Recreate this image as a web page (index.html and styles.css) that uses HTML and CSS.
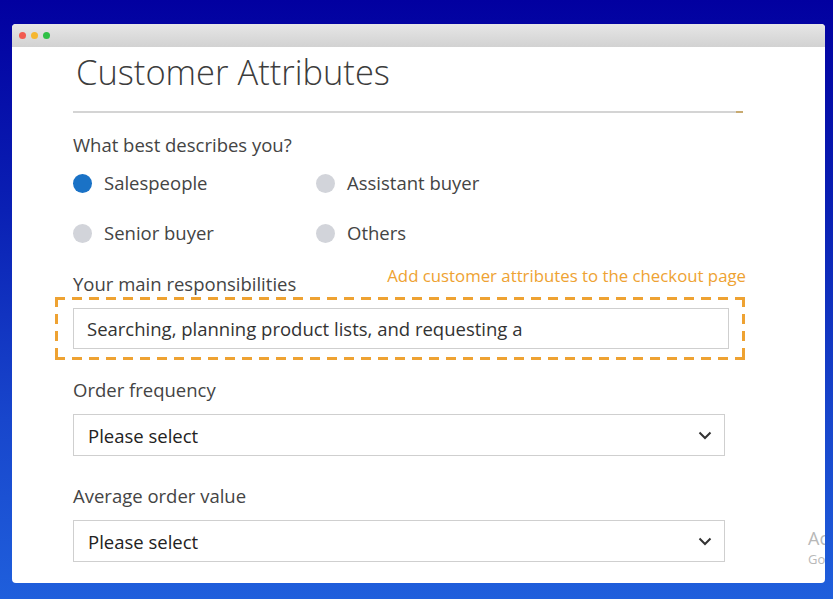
FILE: index.html
```html
<!DOCTYPE html>
<html>
<head>
<meta charset="utf-8">
<link rel="stylesheet" href="styles.css">
</head>
<body>
<div class="window">
  <div class="titlebar">
    <span class="dot red"></span><span class="dot yellow"></span><span class="dot green"></span>
  </div>
  <div class="content">
    <h1 class="title">Customer Attributes</h1>
    <div class="divider"></div>
    <div class="question">What best describes you?</div>
    <div class="radios">
      <div class="radio"><span class="circle on"></span>Salespeople</div>
      <div class="radio"><span class="circle"></span>Assistant buyer</div>
      <div class="radio"><span class="circle"></span>Senior buyer</div>
      <div class="radio"><span class="circle"></span>Others</div>
    </div>
    <div class="resp-head">
      <span class="label">Your main responsibilities</span>
      <span class="hint">Add customer attributes to the checkout page</span>
    </div>
    <div class="dashed">
      <div class="input">Searching, planning product lists, and requesting a</div>
    </div>
    <div class="label field-label">Order frequency</div>
    <div class="select">Please select
      <svg class="chev" width="14" height="9" viewBox="0 0 14 9"><path d="M1.5 1.5 L7 7 L12.5 1.5" fill="none" stroke="#333" stroke-width="2"/></svg>
    </div>
    <div class="label field-label second">Average order value</div>
    <div class="select">Please select
      <svg class="chev" width="14" height="9" viewBox="0 0 14 9"><path d="M1.5 1.5 L7 7 L12.5 1.5" fill="none" stroke="#333" stroke-width="2"/></svg>
    </div>
  </div>
  <div class="watermark"><div class="wm1">Activate Windows</div><div class="wm2">Go to Settings to activate Windows.</div></div>
</div>
</body>
</html>
```

FILE: styles.css
```css
html, body {
  margin: 0;
  padding: 0;
}
body {
  width: 833px;
  height: 599px;
  overflow: hidden;
  background: linear-gradient(180deg, #0200a0 0%, #0a20b4 35%, #1846cc 70%, #1f5fdc 100%);
  font-family: "Open Sans", "Noto Sans", sans-serif;
  padding: 24px 0 0 12px;
  box-sizing: border-box;
}
.window {
  position: relative;
  width: 813px;
  height: 559px;
  background: #fff;
  border-radius: 4px;
  overflow: hidden;
}
.titlebar {
  height: 23px;
  background: linear-gradient(180deg, #e6e6e6 0%, #d2d2d2 100%);
  display: flex;
  align-items: center;
  padding-left: 7px;
  gap: 5px;
}
.dot {
  width: 7px;
  height: 7px;
  border-radius: 50%;
}
.red { background: #f25a50; }
.yellow { background: #f5b730; }
.green { background: #2fc046; }
.content {
  padding: 0 0 0 61px;
  color: #444;
}
.title {
  margin: 2px 0 0 3px;
  font-weight: 300;
  font-size: 34.5px;
  line-height: 46px;
  color: #3c3c3c;
  letter-spacing: 0;
}
.divider {
  width: 670px;
  height: 2px;
  margin-top: 16px;
  background: linear-gradient(90deg, #d4d4d4 0%, #d4d4d4 99%, #c8aa70 99%);
}
.question {
  margin-top: 20px;
  font-size: 18.5px;
  line-height: 24px;
}
.radios {
  display: grid;
  grid-template-columns: 243px auto;
  row-gap: 26px;
  margin-top: 14px;
}
.radio {
  display: flex;
  align-items: center;
  font-size: 18.5px;
  line-height: 24px;
  color: #444;
}
.circle {
  width: 19px;
  height: 19px;
  border-radius: 50%;
  background: #d2d4da;
  margin-right: 12px;
}
.circle.on { background: #1a72c6; }
.resp-head {
  display: flex;
  justify-content: space-between;
  align-items: flex-end;
  width: 673px;
  margin-top: 23px;
}
.label {
  font-size: 18.5px;
  line-height: 24px;
  color: #444;
}
.resp-head .label { position: relative; top: 4px; }
.hint {
  font-size: 16.8px;
  line-height: 22px;
  color: #eea232;
  position: relative;
  top: -5px;
}
.dashed {
  margin: 5px 0 0 -18px;
  width: 690px;
  height: 63px;
  box-sizing: border-box;
  padding: 11px 0 0 18px;
  background-image:
    repeating-linear-gradient(90deg, #eea232 0 10px, transparent 10px 17px),
    repeating-linear-gradient(90deg, #eea232 0 10px, transparent 10px 17px),
    repeating-linear-gradient(180deg, #eea232 0 10px, transparent 10px 17px),
    repeating-linear-gradient(180deg, #eea232 0 10px, transparent 10px 17px);
  background-size: 100% 3px, 100% 3px, 3px 100%, 3px 100%;
  background-position: 0 0, 0 100%, 0 0, 100% 0;
  background-repeat: no-repeat;
}
.input {
  width: 656px;
  height: 41px;
  box-sizing: border-box;
  border: 1px solid #cfcfcf;
  padding-left: 13px;
  font-size: 18.5px;
  line-height: 39px;
  color: #333;
}
.field-label {
  margin-top: 18px;
}
.field-label.second { margin-top: 28px; }
.select {
  margin-top: 12px;
  width: 652px;
  height: 42px;
  box-sizing: border-box;
  border: 1px solid #cfcfcf;
  padding: 0 12px 0 14px;
  display: flex;
  align-items: center;
  justify-content: space-between;
  font-size: 18.5px;
  color: #222;
}
.watermark {
  position: absolute;
  left: 796px;
  top: 502px;
  color: #b8b8b8;
  white-space: nowrap;
}
.wm1 { font-size: 18px; line-height: 24px; }
.wm2 { font-size: 13px; line-height: 18px; }
```
